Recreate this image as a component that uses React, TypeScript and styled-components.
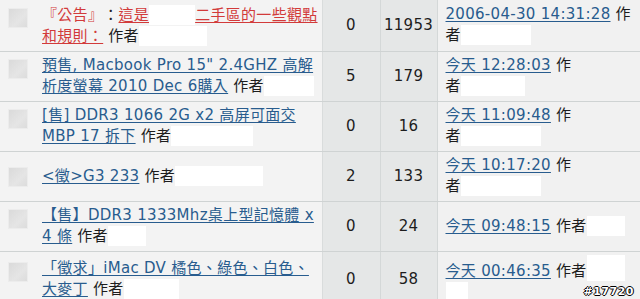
import React from 'react'
import styled, { createGlobalStyle } from 'styled-components'

const AUTHOR = '\u4f5c\u8005'
const TODAY = '\u4eca\u5929'

type Row = {
  lines: string[]
  titleBlank: number
  replies: number
  views: number
  time: string
  splitAuthor: boolean
  lastBlank: number
  lastExtra?: number
}

const rows: Row[] = [
  {
    lines: [],
    titleBlank: 68,
    replies: 0,
    views: 11953,
    time: '2006-04-30 14:31:28',
    splitAuthor: true,
    lastBlank: 70,
  },
  {
    lines: [
      '\u9810\u552e, Macbook Pro 15" 2.4GHZ \u9ad8\u89e3',
      '\u6790\u5ea6\u87a2\u5e55 2010 Dec 6\u8cfc\u5165',
    ],
    titleBlank: 50,
    replies: 5,
    views: 179,
    time: TODAY + ' 12:28:03',
    splitAuthor: true,
    lastBlank: 64,
  },
  {
    lines: [
      '[\u552e] DDR3 1066 2G x2 \u9ad8\u5c4f\u53ef\u9762\u4ea4',
      'MBP 17 \u62c6\u4e0b',
    ],
    titleBlank: 82,
    replies: 0,
    views: 16,
    time: TODAY + ' 11:09:48',
    splitAuthor: true,
    lastBlank: 80,
  },
  {
    lines: ['<\u5fb5>G3 233'],
    titleBlank: 88,
    replies: 2,
    views: 133,
    time: TODAY + ' 10:17:20',
    splitAuthor: true,
    lastBlank: 80,
  },
  {
    lines: [
      '\u3010\u552e\u3011DDR3 1333Mhz\u684c\u4e0a\u578b\u8a18\u61b6\u9ad4 x',
      '4 \u689d',
    ],
    titleBlank: 38,
    replies: 0,
    views: 24,
    time: TODAY + ' 09:48:15',
    splitAuthor: false,
    lastBlank: 38,
  },
  {
    lines: [
      '\u300c\u5fb5\u6c42\u300diMac DV \u6a58\u8272\u3001\u7da0\u8272\u3001\u767d\u8272\u3001',
      '\u5927\u9ea5\u4e01',
    ],
    titleBlank: 55,
    replies: 0,
    views: 58,
    time: TODAY + ' 00:46:35',
    splitAuthor: false,
    lastBlank: 38,
    lastExtra: 22,
  },
]

function withBreaks(lines: string[]) {
  return lines.map((line, i) => (
    <React.Fragment key={i}>
      {i > 0 && <br />}
      {line}
    </React.Fragment>
  ))
}

function NoticeTitle() {
  return (
    <>
      <Notice>{'\u300e\u516c\u544a\u300f'}</Notice>
      <Colon>{'\uff1a'}</Colon>
      <NoticeLink href="#">{'\u9019\u662f'}</NoticeLink>
      <Blank $w={46} />
      <NoticeLink href="#">
        {'\u4e8c\u624b\u5340\u7684\u4e00\u4e9b\u89c0\u9ede'}
        <br />
        {'\u548c\u898f\u5247\uff1a'}
      </NoticeLink>
    </>
  )
}

function App() {
  return (
    <Page>
      <GlobalStyle />
      <Table>
        <colgroup>
          <col style={{ width: 36 }} />
          <col style={{ width: 286 }} />
          <col style={{ width: 58 }} />
          <col style={{ width: 57 }} />
          <col style={{ width: 203 }} />
        </colgroup>
        <tbody>
          {rows.map((row, i) => {
            const single = i !== 0 && row.lines.length === 1
            return (
              <tr key={i}>
                <IconCell>
                  <Icon $single={single} />
                </IconCell>
                <TitleCell>
                  {i === 0 ? (
                    <NoticeTitle />
                  ) : (
                    <TopicLink href="#">{withBreaks(row.lines)}</TopicLink>
                  )}{' '}
                  <Author>{AUTHOR}</Author>
                  <Blank $w={row.titleBlank} />
                </TitleCell>
                <CountCell>{row.replies}</CountCell>
                <CountCell>{row.views}</CountCell>
                <LastCell>
                  <TopicLink href="#">{row.time}</TopicLink>{' '}
                  {row.splitAuthor ? (
                    <Author>
                      {AUTHOR[0]}
                      <br />
                      {AUTHOR[1]}
                    </Author>
                  ) : (
                    <Author>{AUTHOR}</Author>
                  )}
                  <Blank $w={row.lastBlank} $h={row.lastExtra ? 26 : 20} />
                  {row.lastExtra && (
                    <>
                      <br />
                      <Blank $w={row.lastExtra} />
                    </>
                  )}
                </LastCell>
              </tr>
            )
          })}
        </tbody>
      </Table>
      <Watermark>#17720</Watermark>
    </Page>
  )
}

const GlobalStyle = createGlobalStyle`
  body {
    margin: 0;
    background: #f3f3f3;
    font-family: "DejaVu Sans", "Noto Sans CJK TC", sans-serif;
  }
`

const Page = styled.div`
  position: relative;
  width: 640px;
  height: 299px;
  overflow: hidden;
`

const Table = styled.table`
  width: 640px;
  table-layout: fixed;
  border-collapse: collapse;
  font-size: 15px;
  line-height: 21px;
  letter-spacing: 0.3px;
  text-spacing-trim: space-all;
  color: #1d1d1d;

  tr {
    height: 50px;
  }

  td {
    border-bottom: 1px solid #cfd3d3;
    vertical-align: middle;
    white-space: nowrap;
  }
`

const IconCell = styled.td`
  background: #f3f3f3;
  padding: 0 0 0 8px;
`

const Icon = styled.div<{ $single: boolean }>`
  width: 18px;
  height: 18px;
  margin-top: ${(p) => (p.$single ? '0' : '-16px')};
  background: linear-gradient(135deg, #dadada 0%, #e5e5e5 60%, #dcdcdc 100%);
  border: 1px solid #ececec;
`

const TitleCell = styled.td`
  background: #f3f3f3;
  padding: 3px 6px 4px 6px;
  border-right: 1px solid #d9dcdc;
`

const CountCell = styled.td`
  background: #e5e7e7;
  text-align: center;
  border-right: 1px solid #d4d8d8;
`

const LastCell = styled.td`
  background: #f1f1f1;
  padding: 3px 4px 4px 8px;
`

const TopicLink = styled.a`
  color: #285c8e;
  text-decoration: underline;
  text-underline-offset: 2px;
`

const NoticeLink = styled(TopicLink)`
  color: #d23a3a;
`

const Notice = styled.span`
  color: #d23a3a;
  font-family: "Noto Sans CJK TC", sans-serif;
`

const Colon = styled.span`
  color: #222;
  font-family: "Noto Sans CJK TC", sans-serif;
`

const Author = styled.span`
  color: #1d1d1d;
`

const Blank = styled.span<{ $w: number; $h?: number }>`
  display: inline-block;
  width: ${(p) => p.$w}px;
  height: ${(p) => p.$h ?? 20}px;
  background: #ffffff;
  vertical-align: -5px;
`

const Watermark = styled.div`
  position: absolute;
  right: 6px;
  bottom: 1px;
  font-family: "DejaVu Sans", sans-serif;
  font-size: 11px;
  font-weight: bold;
  color: #ffffff;
  letter-spacing: 0.5px;
  text-shadow:
    1px 0 0 #000,
    -1px 0 0 #000,
    0 1px 0 #000,
    0 -1px 0 #000;
`

export default App
